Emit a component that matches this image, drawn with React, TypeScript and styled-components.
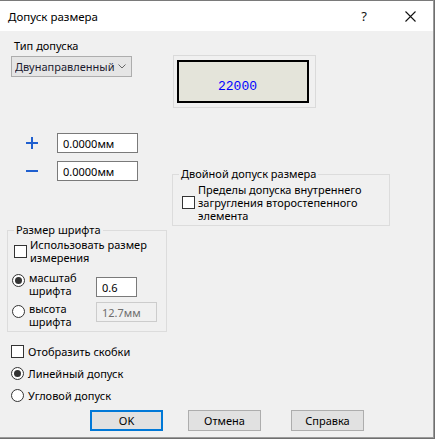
import React from "react";
import styled, { createGlobalStyle } from "styled-components";

const Global = createGlobalStyle`
  html, body { margin: 0; padding: 0; background: #6f6f6f; }
  body {
    font-family: "Noto Sans", "Segoe UI", sans-serif;
    font-size: 11px;
    color: #000;
  }
  * { box-sizing: border-box; }
`;

const Window = styled.div`
  width: 434px;
  height: 438px;
  border-top: 1px solid #7a7a7a;
  border-right: 1px solid #9a9a9a;
  border-bottom: 1px solid #9a9a9a;
  background: #f0f0f0;
  display: flex;
  flex-direction: column;
`;

const TitleBar = styled.div`
  height: 30px;
  background: #fff;
  display: flex;
  align-items: center;
`;

const Title = styled.div`
  flex: 1;
  padding-left: 8px;
  font-size: 11.5px;
  line-height: 16px;
  margin-top: 2px;
`;

const TitleButton = styled.div`
  width: 46px;
  height: 30px;
  display: flex;
  align-items: center;
  justify-content: center;
  font-size: 13px;
  color: #111;
`;

const Body = styled.div`
  flex: 1;
  display: flex;
  flex-direction: column;
  padding-left: 7px;
`;

const Columns = styled.div`
  display: flex;
`;

const LeftCol = styled.div`
  width: 165px;
  display: flex;
  flex-direction: column;
  align-items: flex-start;
`;

const RightCol = styled.div`
  display: flex;
  flex-direction: column;
  align-items: flex-start;
`;

const Label = styled.div`
  margin: 7px 0 0 7px;
  line-height: 15px;
`;

const Select = styled.div`
  margin: 3px 0 0 4px;
  width: 121px;
  height: 21px;
  border: 1px solid #adadad;
  background: #e5e5e5;
  display: flex;
  align-items: center;
  padding: 0 5px 0 3px;
  color: #1a1a2e;
  white-space: nowrap;
  overflow: hidden;
`;

const SelectText = styled.span`
  flex: 1;
  overflow: hidden;
`;

const Tolerances = styled.div`
  margin-top: 56px;
  display: flex;
  flex-direction: column;
  gap: 8px;
`;

const SignRow = styled.div`
  display: flex;
  align-items: center;
  padding-left: 19px;
  gap: 19px;
`;

const TextField = styled.input<{ $w: number; $top?: number }>`
  width: ${(p) => p.$w}px;
  height: 20px;
  margin: ${(p) => p.$top ?? 0}px 0 0 0;
  border: 1px solid ${(p) => (p.disabled ? "#cccccc" : "#7a7a7a")};
  background: ${(p) => (p.disabled ? "#f0f0f0" : "#fff")};
  color: ${(p) => (p.disabled ? "#6d6d6d" : "#000")};
  font-family: inherit;
  font-size: 11px;
  padding: 0 0 0 5px;
  outline: none;
`;

const Group = styled.fieldset<{ $w: number; $top: number; $pt?: number }>`
  margin: ${(p) => p.$top}px 0 0 0;
  width: ${(p) => p.$w}px;
  border: 1px solid #dcdcdc;
  padding: ${(p) => p.$pt ?? 0}px 6px 3px 6px;
  min-width: 0;
`;

const Legend = styled.legend`
  padding: 0 2px;
  line-height: 16px;
  font-size: 11px;
`;

const CheckBox = styled.span`
  flex: none;
  display: inline-block;
  width: 13px;
  height: 13px;
  border: 1px solid #333;
  background: #fff;
`;

const Radio = styled.span<{ $checked?: boolean; $top?: number }>`
  flex: none;
  position: relative;
  display: inline-block;
  width: 13px;
  height: 13px;
  margin-top: ${(p) => p.$top ?? 0}px;
  border: 1px solid #333;
  border-radius: 50%;
  background: #fff;
  &::after {
    content: "";
    display: ${(p) => (p.$checked ? "block" : "none")};
    position: absolute;
    left: 2px;
    top: 2px;
    width: 7px;
    height: 7px;
    border-radius: 50%;
    background: #333;
  }
`;

const WrapRow = styled.div<{ $indent?: number; $gap?: number }>`
  display: flex;
  align-items: center;
  margin-left: ${(p) => p.$indent ?? 0}px;
  gap: ${(p) => p.$gap ?? 3}px;
`;

const WrapText = styled.div`
  line-height: 13px;
`;

const RadioRow = styled.div<{ $top: number }>`
  display: grid;
  grid-template-columns: 13px 63px auto;
  column-gap: 4px;
  align-items: start;
  margin: ${(p) => p.$top}px 0 0 -2px;
`;

const Preview = styled.div`
  margin: 24px 0 0 1px;
  width: 143px;
  height: 53px;
  border: 1px solid #dadada;
  padding: 4px 6px 4px 3px;
`;

const PreviewInner = styled.div`
  width: 100%;
  height: 100%;
  border: 2px solid #000;
  background: #e4e4da;
  display: flex;
  align-items: center;
  justify-content: center;
  padding: 10px 11px 0 0;
  font-family: "Liberation Mono", "DejaVu Sans Mono", monospace;
  font-size: 13px;
  color: #0000ff;
`;

const Options = styled.div`
  margin: 8px 0 0 4px;
  display: flex;
  flex-direction: column;
`;

const OptionRow = styled.div`
  height: 22px;
  display: flex;
  align-items: center;
  gap: 4px;
  line-height: 15px;
`;

const ButtonBar = styled.div`
  margin-top: 4px;
  padding-left: 83px;
  display: flex;
  gap: 25px;
`;

const Button = styled.div<{ $primary?: boolean; $extra?: number }>`
  width: 73px;
  height: 21px;
  margin-left: ${(p) => p.$extra ?? 0}px;
  background: #e1e1e1;
  border: ${(p) => (p.$primary ? "2px solid #0078d7" : "1px solid #adadad")};
  display: flex;
  align-items: center;
  justify-content: center;
  font-size: 11px;
`;

const Sign = ({ minus }: { minus?: boolean }) => (
  <svg width="12" height="12" viewBox="0 0 12 12">
    {!minus && <path d="M6 0v12" stroke="#1f5fcf" strokeWidth="2" />}
    <path d="M0 6h12" stroke="#1f5fcf" strokeWidth="2" />
  </svg>
);

const Chevron = () => (
  <svg width="8" height="5" viewBox="0 0 8 5">
    <path d="M0.5 0.5L4 4L7.5 0.5" fill="none" stroke="#666" strokeWidth="1" />
  </svg>
);

const CloseIcon = () => (
  <svg width="11" height="11" viewBox="0 0 11 11">
    <path d="M0.5 0.5L10.5 10.5M10.5 0.5L0.5 10.5" stroke="#111" strokeWidth="1.1" />
  </svg>
);

export default function App() {
  return (
    <>
      <Global />
      <Window>
        <TitleBar>
          <Title>Допуск размера</Title>
          <TitleButton>?</TitleButton>
          <TitleButton>
            <CloseIcon />
          </TitleButton>
        </TitleBar>
        <Body>
          <Columns>
            <LeftCol>
              <Label>Тип допуска</Label>
              <Select>
                <SelectText>Двунаправленный</SelectText>
                <Chevron />
              </Select>
              <Tolerances>
                <SignRow>
                  <Sign />
                  <TextField $w={81} readOnly defaultValue="0.0000мм" />
                </SignRow>
                <SignRow>
                  <Sign minus />
                  <TextField $w={81} readOnly defaultValue="0.0000мм" />
                </SignRow>
              </Tolerances>
              <Group $w={160} $top={41}>
                <Legend>Размер шрифта</Legend>
                <WrapRow>
                  <CheckBox />
                  <WrapText>
                    Использовать размер
                    <br />
                    измерения
                  </WrapText>
                </WrapRow>
                <RadioRow $top={7}>
                  <Radio $checked $top={3} />
                  <WrapText>
                    масштаб
                    <br />
                    шрифта
                  </WrapText>
                  <TextField $w={41} $top={6} readOnly defaultValue="0.6" />
                </RadioRow>
                <RadioRow $top={5}>
                  <Radio $top={3} />
                  <WrapText>
                    высота
                    <br />
                    шрифта
                  </WrapText>
                  <TextField $w={61} disabled defaultValue="12.7мм" />
                </RadioRow>
              </Group>
            </LeftCol>
            <RightCol>
              <Preview>
                <PreviewInner>22000</PreviewInner>
              </Preview>
              <Group $w={218} $top={58} $pt={1}>
                <Legend>Двойной допуск размера</Legend>
                <WrapRow $indent={3} $gap={3}>
                  <CheckBox />
                  <WrapText>
                    Пределы допуска внутреннего
                    <br />
                    загругления второстепенного
                    <br />
                    элемента
                  </WrapText>
                </WrapRow>
              </Group>
            </RightCol>
          </Columns>
          <Options>
            <OptionRow>
              <CheckBox />
              <span>Отобразить скобки</span>
            </OptionRow>
            <OptionRow>
              <Radio $checked />
              <span>Линейный допуск</span>
            </OptionRow>
            <OptionRow>
              <Radio />
              <span>Угловой допуск</span>
            </OptionRow>
          </Options>
          <ButtonBar>
            <Button $primary>OK</Button>
            <Button>Отмена</Button>
            <Button $extra={5}>Справка</Button>
          </ButtonBar>
        </Body>
      </Window>
    </>
  );
}
